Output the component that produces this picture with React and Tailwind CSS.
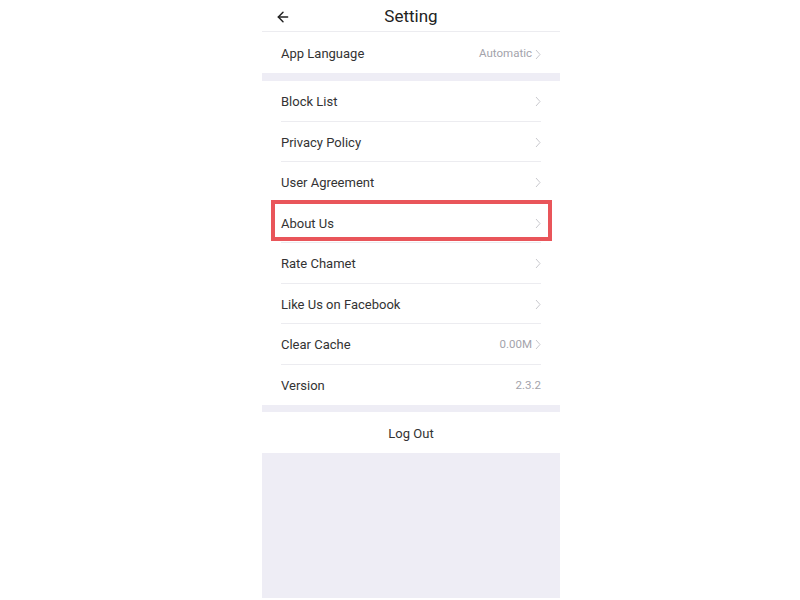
import { ArrowLeft } from "lucide-react";

const rows = [
  { label: "Block List", arrow: true },
  { label: "Privacy Policy", arrow: true },
  { label: "User Agreement", arrow: true },
  { label: "About Us", arrow: true, mark: true },
  { label: "Rate Chamet", arrow: true },
  { label: "Like Us on Facebook", arrow: true },
  { label: "Clear Cache", value: "0.00M", arrow: true },
  { label: "Version", value: "2.3.2" },
];

const Chevron = () => (
  <svg width="6" height="11" viewBox="0 0 6 11" className="ml-[3px]">
    <path d="M1 1l4 4.5-4 4.5" fill="none" stroke="#c9c9ce" strokeWidth="1" />
  </svg>
);

function Row({ label, value, arrow, last, mark }) {
  return (
    <div className="relative h-[40.5px] px-[19px]">
      <div className={`flex h-full items-center justify-between pt-[2px] ${last ? "" : "border-b border-[#ececf0]"}`}>
        <span className="text-[13px] text-[#333]">{label}</span>
        <span className="flex items-center text-[11.5px] text-[#a3a3ab]">
          {value}
          {arrow && <Chevron />}
        </span>
      </div>
      {mark && (
        <div className="absolute left-[9px] right-[8px] top-[-3px] bottom-[2px] border-4 border-[#e9555a]" />
      )}
    </div>
  );
}

export default function App() {
  return (
    <div className="h-[600px] bg-white" style={{ fontFamily: "Roboto, 'Liberation Sans', sans-serif" }}>
      <div className="ml-[262px] flex h-[598px] w-[298px] flex-col bg-[#eeedf5]">
        <div className="bg-white">
          <div className="relative flex h-[32px] items-center justify-center border-b border-[#ececf0] pt-[3px]">
            <ArrowLeft className="absolute left-[13px] h-[16px] w-[16px] text-[#222]" strokeWidth={2.2} />
            <span className="text-[17px] text-[#222]">Setting</span>
          </div>
          <div className="flex h-[41px] items-center justify-between px-[19px] pt-[3px]">
            <span className="text-[13px] text-[#333]">App Language</span>
            <span className="flex items-center text-[11.5px] text-[#a3a3ab]">
              Automatic
              <Chevron />
            </span>
          </div>
        </div>
        <div className="mt-[8px] bg-white">
          {rows.map((r, i) => (
            <Row key={r.label} {...r} last={i === rows.length - 1} />
          ))}
        </div>
        <div className="mt-[7px] flex h-[41px] items-center justify-center bg-white pt-[2px]">
          <span className="text-[13px] text-[#333]">Log Out</span>
        </div>
      </div>
    </div>
  );
}
